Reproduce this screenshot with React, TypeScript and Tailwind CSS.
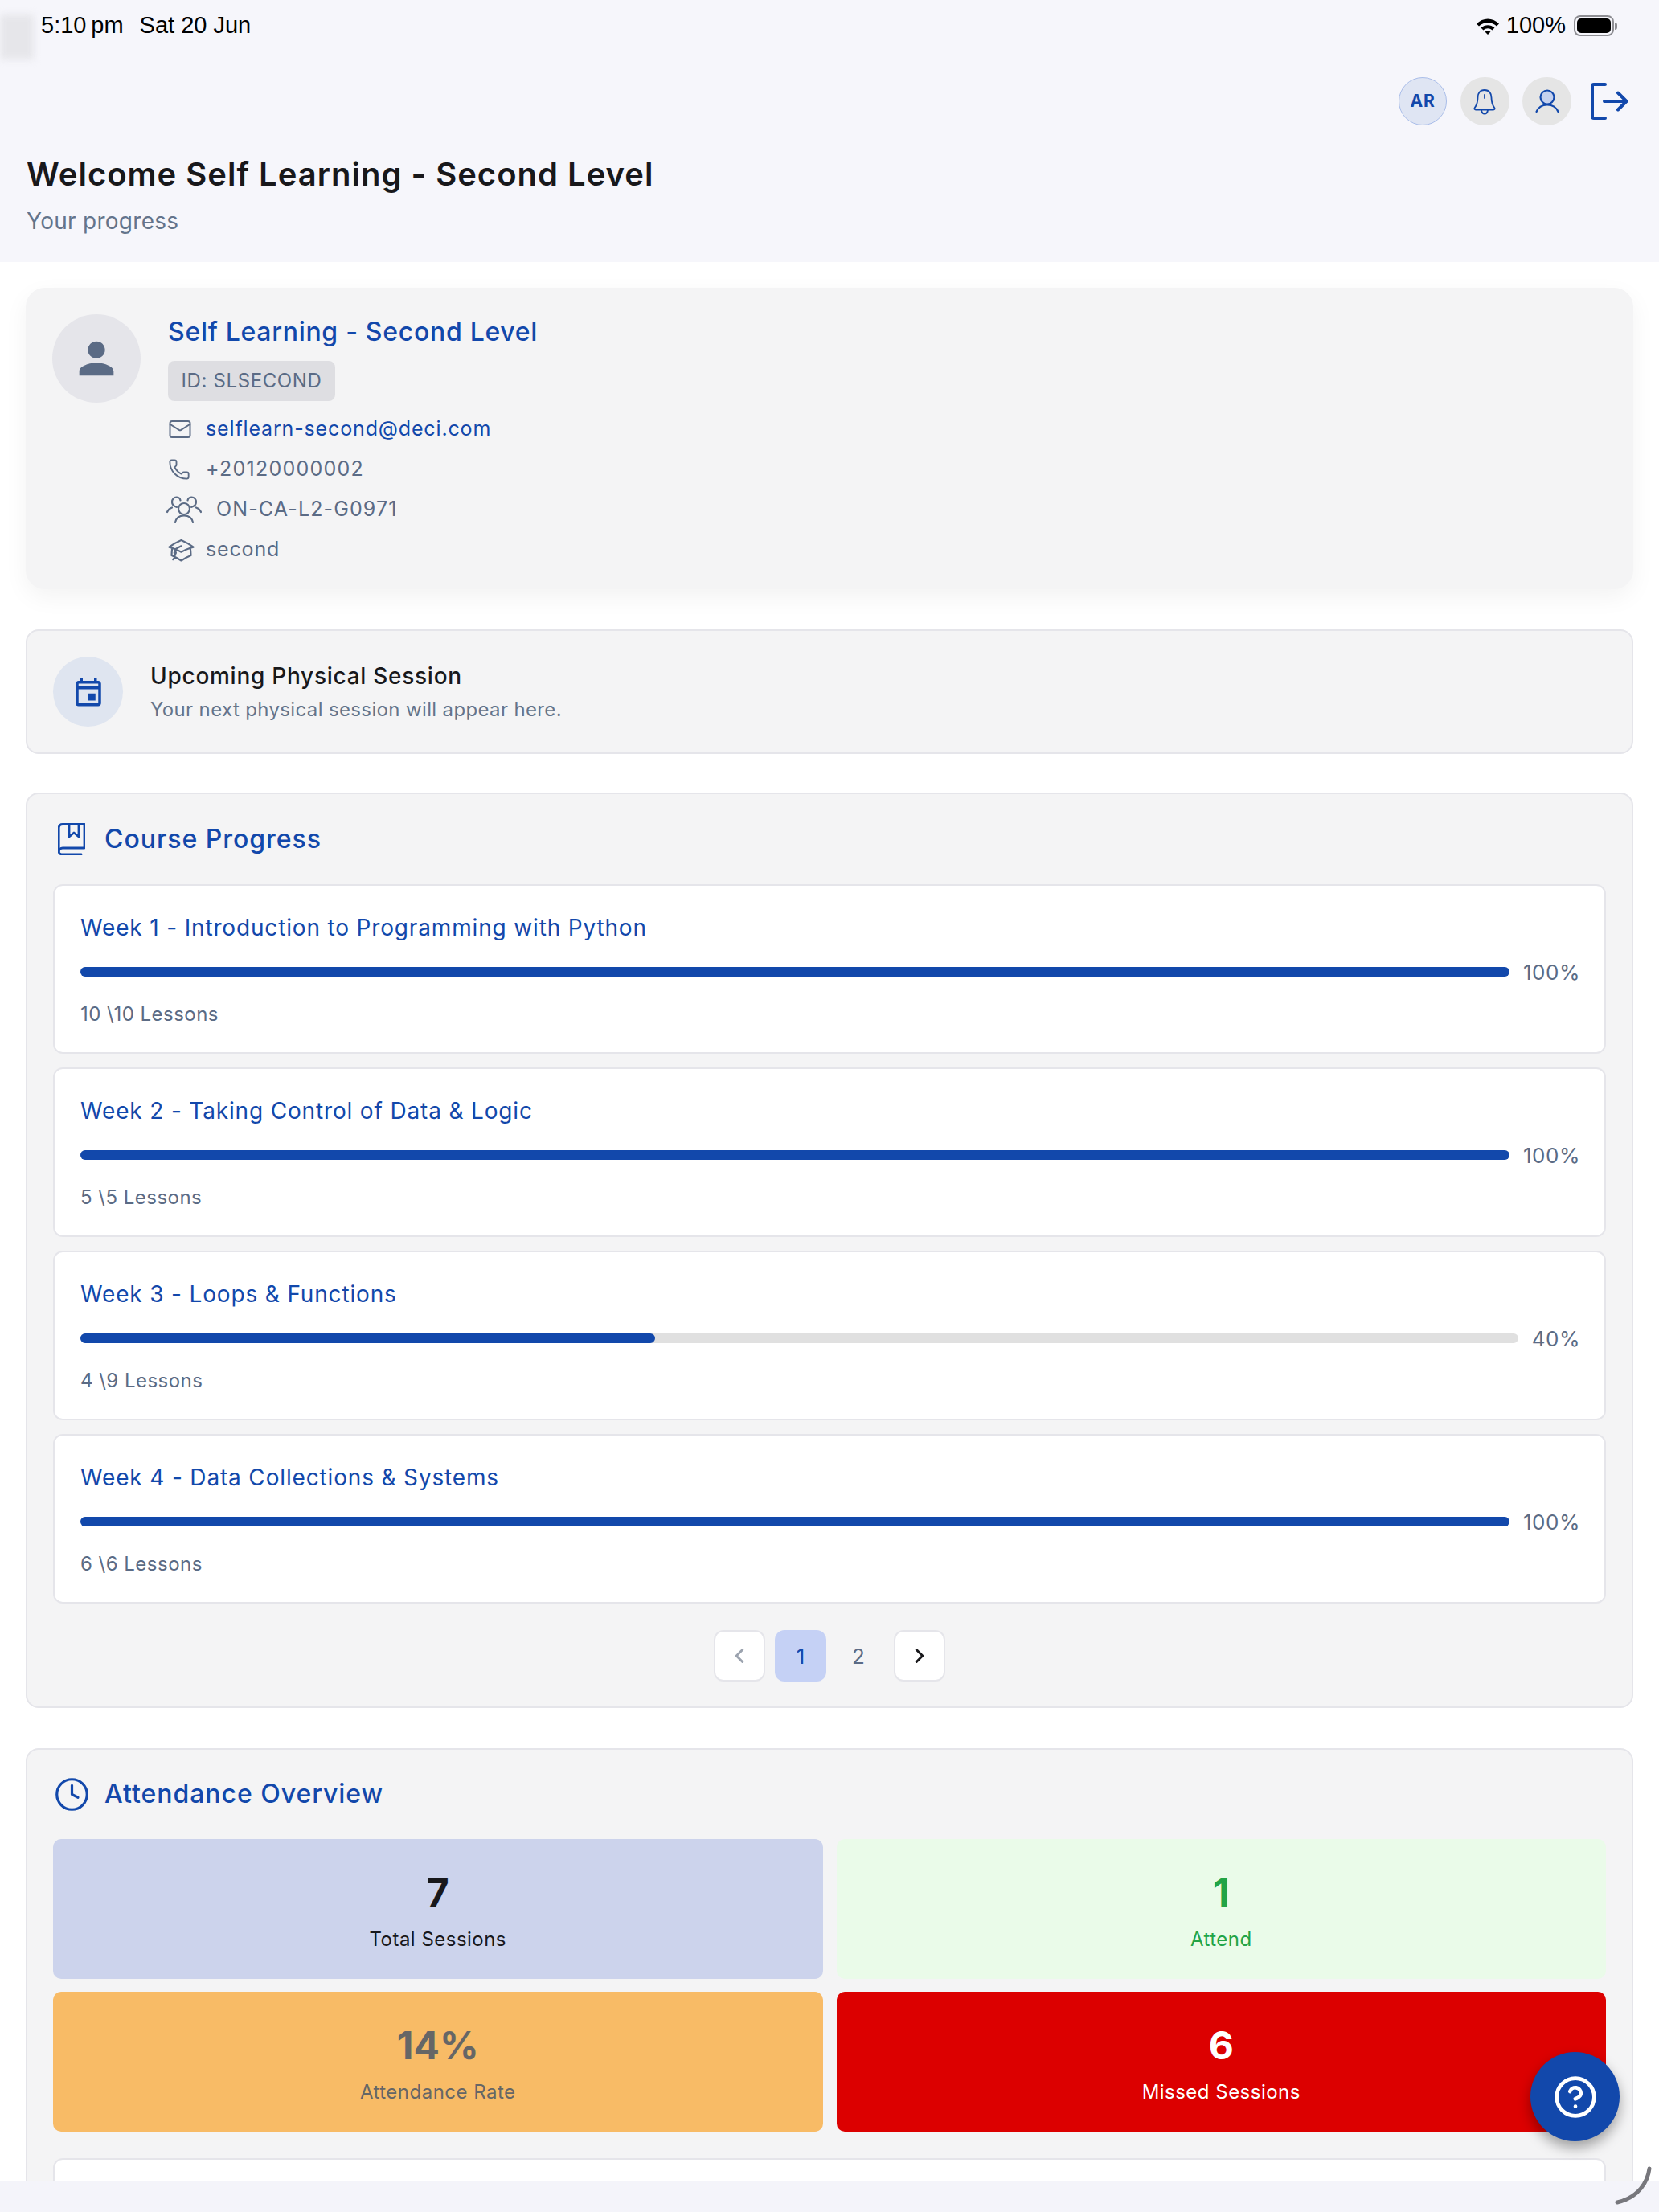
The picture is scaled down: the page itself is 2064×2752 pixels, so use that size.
import { ChevronLeft, ChevronRight, Clock, CircleHelp, Mail, Phone } from "lucide-react";
import { HiOutlineAcademicCap } from "react-icons/hi2";
import { MdOutlineEvent, MdPerson } from "react-icons/md";

const weeks = [
  { title: "Week 1 - Introduction to Programming with Python", lessons: "10 \\10 Lessons", pct: 100 },
  { title: "Week 2 - Taking Control of Data & Logic", lessons: "5 \\5 Lessons", pct: 100 },
  { title: "Week 3 - Loops & Functions", lessons: "4 \\9 Lessons", pct: 40 },
  { title: "Week 4 - Data Collections & Systems", lessons: "6 \\6 Lessons", pct: 100 },
];

const StatusBar = () => (
  <div className="flex h-[64px] items-center justify-between pl-[51px] pr-[52px] [font-family:'Liberation_Sans',sans-serif] text-[29px] text-black">
    <div className="flex gap-[20px]">
      <span>5:10&#8201;pm</span>
      <span>Sat 20 Jun</span>
    </div>
    <div className="flex items-center">
      <svg width="30" height="21" viewBox="0 0 30 21" className="mr-[8px]">
        <path d="M1 7.5C9 -0.5 21 -0.5 29 7.5L26 10.5C19.5 4.5 10.5 4.5 4 10.5Z" fill="#000" />
        <path d="M6.5 12.5C11.5 8 18.5 8 23.5 12.5L20.5 15.5C17 12.5 13 12.5 9.5 15.5Z" fill="#000" />
        <path d="M11.5 17.5C13.5 16 16.5 16 18.5 17.5L15 21Z" fill="#000" />
      </svg>
      <span className="mr-[10px]">100%</span>
      <div className="h-[26px] w-[50px] rounded-[8px] border-2 border-[#8e8e93] p-[2px]">
        <div className="h-full w-full rounded-[5px] bg-black" />
      </div>
      <div className="ml-[1px] h-[9px] w-[3px] rounded-r-full bg-[#8e8e93]" />
    </div>
  </div>
);

const HeaderActions = () => (
  <div className="flex items-center justify-end pr-[39px] pt-[32px]">
    <div className="mr-[17px] flex h-[60px] w-[60px] items-center justify-center rounded-full border border-[#a9bde9] bg-[#dfe5f3] text-[21px] font-bold tracking-[0.04em] text-[#1248ab]">
      AR
    </div>
    <div className="mr-[16px] flex h-[60px] w-[61px] items-center justify-center rounded-full bg-[#e5e5e5]">
      <svg width="30" height="34" viewBox="0 0 30 34" fill="none" stroke="#1248ab" strokeWidth="1.8" strokeLinejoin="round" strokeLinecap="round" className="-ml-[2px]">
        <path d="M15 3C9 3 6.5 7.5 6.5 12.5C6.5 18 5.5 21.5 2.5 25.5C2 26.5 2.5 27.5 4 27.5H26C27.5 27.5 28 26.5 27.5 25.5C24.5 21.5 23.5 18 23.5 12.5C23.5 7.5 21 3 15 3Z" />
        <path d="M11 28C11.5 31.5 13 32.5 15 32.5C17 32.5 18.5 31.5 19 28" />
        <path d="M15 9V13" />
      </svg>
    </div>
    <div className="mr-[24px] flex h-[60px] w-[61px] items-center justify-center rounded-full bg-[#e5e5e5]">
      <svg width="30" height="30" viewBox="0 0 30 30" fill="none" stroke="#1248ab" strokeWidth="2.2" strokeLinecap="round">
        <circle cx="15" cy="10" r="8.5" fill="#c5d1ee" />
        <path d="M1.5 28C4 22 9 19.5 15 19.5C21 19.5 26 22 28.5 28" />
      </svg>
    </div>
    <svg width="46" height="46" viewBox="0 0 46 46" fill="none" stroke="#1248ab" strokeWidth="4" strokeLinecap="round" strokeLinejoin="round">
      <path d="M18 2H4C2.8 2 2 2.8 2 4V42C2 43.2 2.8 44 4 44H18" />
      <path d="M17 23H44" />
      <path d="M34 12.5L44.5 23L34 33.5" />
    </svg>
  </div>
);

const GroupIcon = () => (
  <svg width="44" height="34" viewBox="0 0 44 34" fill="none" stroke="#5b6b85" strokeWidth="2.2" strokeLinecap="round" strokeLinejoin="round" className="-ml-[2px] shrink-0">
    <circle cx="22" cy="16" r="7" />
    <path d="M11 33C12 27.5 16 24.5 22 24.5C28 24.5 32 27.5 33 33" />
    <path d="M13 14C9.5 13 7 10.5 7 7.5C7 4 9.5 1.5 12.5 1.5C15 1.5 17 3 17.5 5.5" />
    <path d="M1 20C2 17.5 4 15.5 7 14.5" />
    <path d="M31 14C34.5 13 37 10.5 37 7.5C37 4 34.5 1.5 31.5 1.5C29 1.5 27 3 26.5 5.5" />
    <path d="M43 20C42 17.5 40 15.5 37 14.5" />
  </svg>
);

const BookIcon = () => (
  <svg width="34" height="40" viewBox="0 0 34 40" fill="none" stroke="#1248ab" strokeWidth="2.8" strokeLinejoin="round" strokeLinecap="round">
    <path d="M33 1.5V31H6C3.2 31 1.2 33 1.2 35.5C1.2 37.5 3 39 6 39H29" />
    <path d="M1.2 35.5V6C1.2 3 3 1.5 6 1.5H33" />
    <path d="M14 1.5V17L20 12L26 17V1.5" />
  </svg>
);

const InfoRow = ({ icon, text, color, wide }: { icon: React.ReactNode; text: string; color: string; wide?: boolean }) => (
  <div className="flex h-[40px] items-center">
    <div className={wide ? "flex w-[60px] items-center" : "flex w-[47px] items-center"}>{icon}</div>
    <span className={`text-[25px] ${color}`}>{text}</span>
  </div>
);

const WeekCard = ({ title, lessons, pct }: { title: string; lessons: string; pct: number }) => (
  <div className="rounded-[12px] border-2 border-[#e5e5ea] bg-white pb-[31px] pl-[32px] pr-[30px] pt-[34px]">
    <div className="h-[36px] text-[28px] leading-[36px] tracking-[0.03em] text-[#1248ab]">{title}</div>
    <div className="mt-[21px] flex h-[32px] items-center gap-[17px]">
      <div className="h-[12px] flex-1 rounded-full bg-[#e0e0e0]">
        <div className="h-full rounded-full bg-[#1248ab]" style={{ width: `${pct}%` }} />
      </div>
      <span className="text-[26px] tracking-[0.02em] text-[#5b6b85]">{pct}%</span>
    </div>
    <div className="mt-[21px] h-[32px] text-[24px] leading-[32px] tracking-[0.02em] text-[#5b6b85]">{lessons}</div>
  </div>
);

const StatCard = ({ value, label, box, valueColor, labelColor }: { value: string; label: string; box: string; valueColor: string; labelColor: string }) => (
  <div className={`flex h-[174px] flex-col items-center rounded-[10px] pt-[37px] ${box}`}>
    <div className={`h-[60px] text-[48px] font-bold leading-[60px] ${valueColor}`}>{value}</div>
    <div className={`mt-[12px] text-[24px] leading-[32px] tracking-[0.02em] ${labelColor}`}>{label}</div>
  </div>
);

export default function App() {
  return (
    <div className="relative h-[2752px] w-full overflow-hidden bg-white [font-family:Inter,sans-serif]">
      <header className="relative h-[326px] bg-[#f6f6fb]">
        <div className="absolute left-0 top-[18px] h-[56px] w-[42px] bg-[#e6e6ea] blur-[5px]" />
        <div className="relative">
          <StatusBar />
          <HeaderActions />
        </div>
        <h1 className="relative mt-[33px] pl-[33px] text-[40px] font-semibold leading-[56px] tracking-[0.025em] text-[#18181b]">
          Welcome Self Learning - Second Level
        </h1>
        <p className="relative mt-[12px] pl-[33px] text-[28px] leading-[36px] tracking-[0.01em] text-[#64748b]">Your progress</p>
      </header>

      <main className="flex flex-col px-[32px] pt-[32px]">
        <section className="flex gap-[34px] rounded-[24px] bg-[#f4f4f5] pb-[29px] pl-[33px] pt-[33px] shadow-[0_10px_30px_rgba(0,0,0,0.05)]">
          <div className="flex h-[110px] w-[110px] items-center justify-center rounded-full bg-[#e5e5ea]">
            <MdPerson size={64} color="#5b6b85" />
          </div>
          <div className="-mt-[1px]">
            <div className="h-[45px] text-[32px] font-medium leading-[45px] tracking-[0.022em] text-[#1248ab]">Self Learning - Second Level</div>
            <div className="mt-[14px] flex h-[50px] w-[208px] items-center justify-center rounded-[8px] bg-[#dedee2] text-[24px] tracking-[0.026em] text-[#5b6b85]">
              ID: SLSECOND
            </div>
            <div className="mt-[15px] flex flex-col gap-[10px]">
              <InfoRow icon={<Mail size={30} color="#5b6b85" strokeWidth={1.6} />} text="selflearn-second@deci.com" color="tracking-[0.034em] text-[#1248ab]" />
              <InfoRow icon={<Phone size={28} color="#5b6b85" strokeWidth={1.6} />} text="+20120000002" color="tracking-[0.05em] text-[#5b6b85]" />
              <InfoRow icon={<GroupIcon />} text="ON-CA-L2-G0971" color="tracking-[0.045em] text-[#5b6b85]" wide />
              <InfoRow icon={<HiOutlineAcademicCap size={35} color="#5b6b85" className="-ml-[1px] shrink-0" />} text="second" color="tracking-[0.034em] text-[#5b6b85]" />
            </div>
          </div>
        </section>

        <section className="mt-[50px] flex h-[155px] items-center gap-[34px] rounded-[16px] border-2 border-[#e5e5ea] bg-[#f4f4f5] pl-[32px]">
          <div className="flex h-[87px] w-[87px] items-center justify-center rounded-full bg-[#dfe5f0]">
            <MdOutlineEvent size={42} color="#1248ab" />
          </div>
          <div className="mt-[2px]">
            <div className="text-[28px] font-medium leading-[40px] tracking-[0.026em] text-[#18181b]">Upcoming Physical Session</div>
            <div className="mt-[2px] text-[24px] leading-[40px] tracking-[0.015em] text-[#64748b]">Your next physical session will appear here.</div>
          </div>
        </section>

        <section className="mt-[48px] rounded-[16px] border-2 border-[#e5e5ea] bg-[#f4f4f5] px-[32px] pb-[31px] pt-[36px]">
          <div className="flex h-[40px] items-center">
            <div className="ml-[6px] mr-[24px] flex">
              <BookIcon />
            </div>
            <h2 className="text-[32px] font-medium tracking-[0.03em] text-[#1248ab]">Course Progress</h2>
          </div>
          <div className="mt-[36px] flex flex-col gap-[17px]">
            {weeks.map((week) => (
              <WeekCard key={week.title} {...week} />
            ))}
          </div>
          <div className="mt-[33px] flex justify-center gap-[12px]">
            <button className="flex h-[64px] w-[64px] items-center justify-center rounded-[12px] border-2 border-[#e5e5ea] bg-white">
              <ChevronLeft size={30} color="#9ca3af" strokeWidth={2.4} />
            </button>
            <div className="flex gap-[8px]">
              <button className="h-[64px] w-[64px] rounded-[12px] bg-[#c5d1f5] text-[26px] text-[#1248ab]">1</button>
              <button className="h-[64px] w-[64px] rounded-[12px] text-[26px] text-[#5b6b85]">2</button>
            </div>
            <button className="flex h-[64px] w-[64px] items-center justify-center rounded-[12px] border-2 border-[#e5e5ea] bg-white">
              <ChevronRight size={30} color="#18181b" strokeWidth={2.4} />
            </button>
          </div>
        </section>

        <section className="mt-[50px] rounded-[16px] border-2 border-[#e5e5ea] bg-[#f4f4f5] px-[32px] pb-[31px] pt-[35px]">
          <div className="flex h-[40px] items-center">
            <div className="ml-[1px] mr-[18px] flex">
              <Clock size={45} color="#1248ab" strokeWidth={1.7} />
            </div>
            <h2 className="text-[32px] font-medium tracking-[0.03em] text-[#1248ab]">Attendance Overview</h2>
          </div>
          <div className="mt-[36px] grid grid-cols-2 gap-x-[17px] gap-y-[16px]">
            <StatCard value="7" label="Total Sessions" box="bg-[#ccd3ec]" valueColor="text-[#18181b]" labelColor="text-[#18181b]" />
            <StatCard value="1" label="Attend" box="bg-[#eafbe9]" valueColor="text-[#22a447]" labelColor="text-[#22a447]" />
            <StatCard value="14%" label="Attendance Rate" box="bg-[#f8bb66]" valueColor="text-[#666666]" labelColor="text-[#666666]" />
            <StatCard value="6" label="Missed Sessions" box="bg-[#dc0000]" valueColor="text-white" labelColor="text-white" />
          </div>
          <div className="mt-[33px] h-[200px] rounded-[12px] border-2 border-[#e5e5ea] bg-white" />
        </section>
      </main>

      <div className="absolute bottom-0 left-0 h-[39px] w-full bg-[#f4f4fa]" />
      <button className="absolute left-[1904px] top-[2553px] flex h-[111px] w-[111px] items-center justify-center rounded-full bg-[#1248ab] shadow-[0_8px_16px_rgba(0,0,0,0.35)]">
        <CircleHelp size={56} color="#fff" strokeWidth={2} />
      </button>
      <svg className="absolute left-[2006px] top-[2694px]" width="52" height="52" viewBox="0 0 52 52" fill="none">
        <path d="M46 4C44 20 33 40 6 46" stroke="#77777c" strokeWidth="5" strokeLinecap="round" />
      </svg>
    </div>
  );
}
